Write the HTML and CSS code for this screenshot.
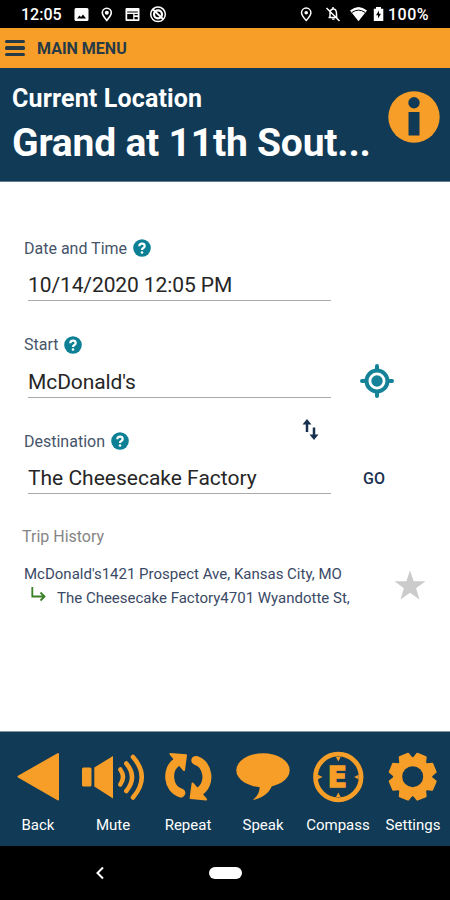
FILE: index.html
```html
<!DOCTYPE html>
<html lang="en">
<head>
<meta charset="utf-8">
<title>Trip Planner</title>
<link rel="stylesheet" href="styles.css">
</head>
<body>
<div class="phone">
  <div class="status">
    <span class="clock">12:05</span>
    <svg class="status-left" viewBox="70 4 100 22">
      <path fill="#fff" fill-rule="evenodd" d="M76 8h11q1.500 0 1.500 1.500v10q0 1.500-1.500 1.500h-11q-1.500 0-1.500-1.500v-10q0-1.500 1.500-1.500zM77 18.500h9l-3-4-2 2.500-1.500-1.500z"/>
      <path fill="none" stroke="#fff" stroke-width="1.600" d="M106.800 20.500c-3-3.500-4.500-5.500-4.500-7.700a4.500 4.500 0 0 1 9 0c0 2.200-1.500 4.200-4.500 7.700z"/>
      <circle cx="106.800" cy="12.800" r="2" fill="#fff"/>
      <path fill="#fff" fill-rule="evenodd" d="M126.500 8h12q1 0 1 1v11q0 1-1 1h-12q-1 0-1-1V9q0-1 1-1zM127.200 11.500v1h10.600v-1zM127.200 14v5.300h6V14zM134.500 14v1.300h3.300V14zM134.500 17v2.300h3.300V17z"/>
      <g fill="none" stroke="#fff"><circle cx="158" cy="14.300" r="7.300" stroke-width="1.500"/><circle cx="158" cy="14.300" r="4" stroke-width="2.200"/><path stroke-width="1.800" d="M153 9.500l10 9.500"/></g>
    </svg>
    <svg class="status-right" viewBox="300 4 86 22">
      <g fill="none" stroke="#fff" stroke-width="1.500"><path d="M306.200 20.500c-3.200-3.500-4.700-5.500-4.700-7.700a4.700 4.700 0 0 1 9.400 0c0 2.200-1.500 4.200-4.700 7.700z"/><path d="M328.500 17.500h9M330 17v-4q0-3.500 3-4t3.500 4v4M326.500 8l13 13M333 7v2"/></g>
      <circle cx="306.200" cy="12.700" r="1.800" fill="#fff"/><path fill="#fff" d="M331.500 18.500h3.500q-1.700 3-3.500 0z"/>
      <path fill="#fff" d="M350 10.500q8.500-7 17 0l-8.500 10.700z"/><path fill="none" stroke="#000" stroke-width="1" d="M352 12.400q6.500-4.500 13 0"/>
      <path fill="#fff" fill-rule="evenodd" d="M376 7h5v1.700h2.300V21h-9.500V8.700h2.200zM379 10.500l-3 4.700h2v3.300l3-4.700h-2z"/>
    </svg>
    <span class="battery">100%</span>
  </div>
  <div class="menu">
    <div class="burger"><i></i><i></i><i></i></div>
    <span>MAIN MENU</span>
  </div>
  <header class="location">
    <div class="place">
      <div class="caption">Current Location</div>
      <div class="stop">Grand at 11th Sout...</div>
    </div>
    <svg class="info" viewBox="0 0 52 52"><circle cx="26" cy="26" r="25.700" fill="#f79e28"/><g fill="#103a55"><circle cx="26" cy="11.700" r="5.700"/><path d="M20.500 21h11v23.500h-11z"/></g></svg>
  </header>
  <main class="planner">
    <section class="field">
      <div class="label"><span class="l-date">Date and Time</span><svg class="help" viewBox="0 0 18 18"><circle cx="9" cy="9" r="8.800"/><path d="M6.300 7.200Q6.400 4.700 9 4.700T11.700 7Q11.700 8.200 10.300 9T9 11"/><circle class="dot" cx="9" cy="13.500" r="1.300"/></svg></div>
      <div class="row"><div class="input i-date">10/14/2020 12:05 PM</div></div>
    </section>
    <section class="field">
      <div class="label"><span class="l-start">Start</span><svg class="help" viewBox="0 0 18 18"><circle cx="9" cy="9" r="8.800"/><path d="M6.300 7.200Q6.400 4.700 9 4.700T11.700 7Q11.700 8.200 10.300 9T9 11"/><circle class="dot" cx="9" cy="13.500" r="1.300"/></svg></div>
      <div class="row"><div class="input i-start">McDonald's</div>
        <svg class="locate" viewBox="0 0 34 34"><g fill="none" stroke="#158298"><circle cx="17" cy="17" r="10.500" stroke-width="4"/><path stroke-width="4" stroke-linecap="round" d="M17 2v4M17 28v4M2 17h4M28 17h4"/></g><circle cx="17" cy="17" r="5.700" fill="#158298"/></svg></div>
    </section>
    <section class="field">
      <div class="label"><span class="l-dest">Destination</span><svg class="help" viewBox="0 0 18 18"><circle cx="9" cy="9" r="8.800"/><path d="M6.300 7.200Q6.400 4.700 9 4.700T11.700 7Q11.700 8.200 10.300 9T9 11"/><circle class="dot" cx="9" cy="13.500" r="1.300"/></svg>
        <svg class="swap" viewBox="302 418 18 23"><path fill="none" stroke="#17304f" stroke-width="2.500" d="M307 432v-9M314 427.500v9"/><path fill="#17304f" d="M302.500 424.500l4.500-5.500 4.500 5.500zM309.500 434.500l4.500 5.500 4.500-5.500z"/></svg></div>
      <div class="row"><div class="input i-dest">The Cheesecake Factory</div><span class="go">GO</span></div>
    </section>
    <h2 class="history-title">Trip History</h2>
    <div class="history">
      <div class="trip">
        <div class="from">McDonald's1421 Prospect Ave, Kansas City, MO</div>
        <div class="to"><svg viewBox="31 586 15 16"><path fill="none" stroke="#3b8127" stroke-width="1.800" d="M32.300 587v9.500H44M40.500 592.500l4 4-4 4"/></svg><span>The Cheesecake Factory4701 Wyandotte St,</span></div>
      </div>
      <svg class="star" viewBox="394 569 32 30"><path fill="#cbcbcb" d="M410 569.500l3.700 10.700 11.800.1-9.400 7 3.400 11.300-9.500-6.800-9.500 6.800 3.400-11.300-9.400-7 11.800-.1z"/></svg>
    </div>
  </main>
  <nav class="tabs">
    <div class="tab"><svg viewBox="0 748 75 58"><path stroke-linejoin="round" stroke="#f79e28" stroke-width="2" d="M18.500 776.700L58 754v45.500z"/></svg><span>Back</span></div>
    <div class="tab"><svg viewBox="75 748 75 58"><rect x="82" y="767.500" width="9.500" height="19" rx="1.500"/><path d="M94.300 767.500L113 756v42.500l-18.700-12z"/><g class="line" stroke-width="4.500" stroke-linecap="round"><path d="M120.300 769.500q5.400 7.500 0 15"/><path d="M126.300 763.500q11.500 13.500 0 27.500"/><path d="M133 757q17.500 20 0 40.500"/></g></svg><span>Mute</span></div>
    <div class="tab"><svg viewBox="150 748 75 58"><g id="turn"><path class="line" stroke-width="9" stroke-linecap="round" d="M180.800 793C167.500 789 166 769 177 762"/><path stroke-linejoin="round" stroke="#f79e28" stroke-width="2" d="M170.500 754L186 755.300 184 770z"/></g><use href="#turn" transform="rotate(180 188.300 776.700)"/></svg><span>Repeat</span></div>
    <div class="tab"><svg viewBox="225 748 75 58"><ellipse cx="263" cy="770.300" rx="26.700" ry="17"/><path d="M259.500 784c1 7-2 12-6.500 16 11-2 18-9 20-17z"/></svg><span>Speak</span></div>
    <div class="tab"><svg viewBox="300 748 75 58"><circle class="line" cx="338.300" cy="777" r="22.800" stroke-width="4.700"/><path d="M336 757h4.600l-2.300 4.500zM336 797h4.600l-2.300-4.500zM318 774.700v4.600l4.500-2.300zM358.600 774.700v4.600l-4.500-2.300z"/><text class="heading" x="327.800" y="787.300">E</text></svg><span>Compass</span></div>
    <div class="tab"><svg viewBox="375 748 75 58"><circle cx="412.700" cy="776.700" r="19.500"/><path id="tooth" stroke="#f79e28" stroke-width="2" stroke-linejoin="round" d="M406 761l2.200-7.300h9l2.200 7.300v31.400l-2.200 7.300h-9l-2.200-7.300z" transform="rotate(22.500 412.700 776.700)"/><use href="#tooth" transform="rotate(45 412.700 776.700)"/><use href="#tooth" transform="rotate(90 412.700 776.700)"/><use href="#tooth" transform="rotate(135 412.700 776.700)"/><circle cx="412.700" cy="776.700" r="10.500" fill="#103a55"/></svg><span>Settings</span></div>
  </nav>
  <div class="system">
    <svg class="sys-back" viewBox="0 0 10 14"><path fill="none" stroke="#fff" stroke-width="2" d="M8 1.500L2.500 7 8 12.500"/></svg>
    <div class="home"></div>
  </div>
</div>
</body>
</html>
```
FILE: styles.css
```css
* { box-sizing: border-box; }
body { margin: 0; font-family: Roboto, sans-serif; background: #fff; }
svg { display: block; flex: none; }
.phone { width: 450px; height: 900px; display: flex; flex-direction: column; overflow: hidden; white-space: nowrap; }

.status { height: 28px; background: #000; color: #fff; display: flex; align-items: center; padding: 2px 0 0 21px; font: 500 16px/26px Roboto, sans-serif; }
.clock { width: 49px; }
.status-left { width: 100px; height: 22px; }
.status-right { width: 86px; height: 22px; margin-left: 130px; }
.battery { margin-left: 2px; letter-spacing: .5px; }

.menu { height: 40px; background: #f79e28; color: #263a47; display: flex; align-items: center; gap: 12px; padding-left: 5px; font-size: 16px; font-weight: 700; }
.burger { width: 20px; display: grid; gap: 3px; }
.burger i { height: 3.500px; border-radius: 1.500px; background: #263a47; }

.location { height: 114px; background: #103a55; color: #fff; display: flex; padding: 15px 10px 0 12px; border-bottom: 1px solid #5f7b8d; }
.place { flex: 1; font-weight: 700; }
.caption { font-size: 25px; line-height: 32px; letter-spacing: .15px; }
.stop { font-size: 39px; line-height: 56px; letter-spacing: -.2px; }
.info { width: 52px; height: 52px; margin-top: 8px; }

.planner { height: 549px; padding: 54px 0 0 24px; }
.field { height: 96.600px; }
.label { height: 24px; display: flex; align-items: center; gap: 6px; font-size: 16px; color: #46546a; }
.help { width: 18px; height: 18px; }
.help circle { fill: #0d8095; }
.help path { fill: none; stroke: #fff; stroke-width: 2.200; }
.help .dot { fill: #fff; }
.swap { width: 18px; height: 23px; margin: -23px 0 0 167px; }
.row { display: flex; margin-left: 4px; }
.input { width: 303px; height: 41px; border-bottom: 1.500px solid #aaa; font-size: 21px; line-height: 50px; color: #262626; }
.i-date { letter-spacing: -.1px; }
.i-start { letter-spacing: -.1px; }
.locate { width: 34px; height: 34px; margin: 7px 0 0 29px; }
.go { margin: 14px 0 0 32px; font-size: 16px; font-weight: 500; line-height: 24px; color: #1b3350; }

.history-title { margin: -1px 0 0 -2px; font-size: 16px; font-weight: 400; line-height: 24px; color: #858585; }
.history { display: flex; margin-top: 13px; font-size: 15px; line-height: 24px; color: #3a4965; }
.trip { width: 370px; }
.to { display: flex; margin-left: 7px; gap: 11px; }
.to svg { width: 15px; height: 16px; }
.star { width: 32px; height: 30px; margin-top: 8px; }

.tabs { height: 115px; background: #103a55; border-top: 1px solid #8495a2; display: grid; grid-template-columns: repeat(6, 75px); }
.tab { display: flex; flex-direction: column; align-items: center; padding: 16px 0 0 1px; color: #fff; font-size: 15px; line-height: 20px; }
.tab svg { width: 75px; height: 58px; margin-left: -1px; margin-bottom: 9px; fill: #f79e28; }
.tab .line, .line { fill: none; stroke: #f79e28; }
.heading { font: 700 28px "DejaVu Sans", sans-serif; stroke: #f79e28; stroke-width: 1.500px; }

.system { height: 54px; background: #000; display: flex; align-items: center; padding-left: 95px; }
.sys-back { width: 10px; height: 14px; }
.home { width: 33px; height: 12px; margin-left: 104px; border-radius: 6px; background: #fff; }
```
